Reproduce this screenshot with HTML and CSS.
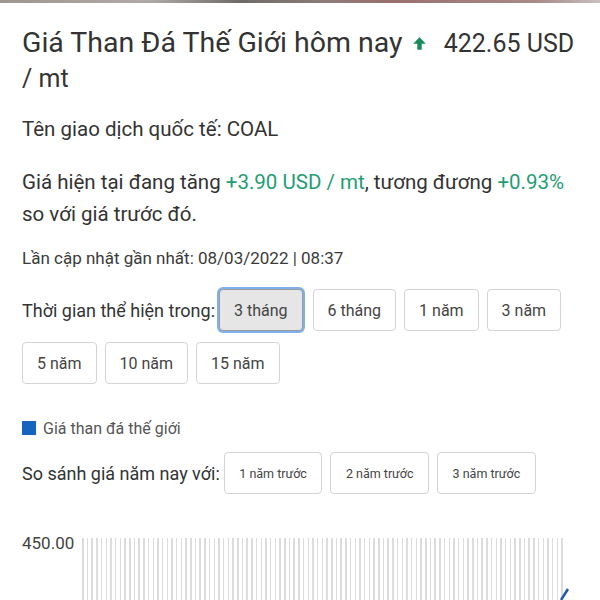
FILE: index.html
```html
<!DOCTYPE html>
<html>

<head>
    <title>Giá Than Đá Thế Giới</title>
    <link rel="stylesheet" href="styles.css">
</head>

<body>
    <div class="topbar"></div>

    <div class="page">
        <h1 class="title">
            Giá Than Đá Thế Giới hôm nay
            <span class="arrow">
                <svg width="15" height="15" viewBox="0 0 24 24">
                    <path d="M12 2L2 12.5h6.5V22h7v-9.5H22z" fill="#178a5c" />
                </svg>
            </span>
            <span class="price">422.65 USD / mt</span>
        </h1>

        <p class="code">Tên giao dịch quốc tế: COAL</p>

        <p class="change">
            Giá hiện tại đang tăng <span class="up">+3.90 USD / mt</span>, tương đương
            <span class="up">+0.93%</span> so với giá trước đó.
        </p>

        <p class="updated">Lần cập nhật gần nhất: 08/03/2022 | 08:37</p>

        <div class="range">
            <span class="range-label">Thời gian thể hiện trong:</span>
            <button class="btn active">3 tháng</button>
            <button class="btn">6 tháng</button>
            <button class="btn">1 năm</button>
            <button class="btn">3 năm</button>
            <button class="btn">5 năm</button>
            <button class="btn">10 năm</button>
            <button class="btn">15 năm</button>
        </div>

        <div class="legend">
            <span class="swatch"></span>
            Giá than đá thế giới
        </div>

        <div class="compare">
            <span class="compare-label">So sánh giá năm nay với:</span>
            <button class="btn small">1 năm trước</button>
            <button class="btn small">2 năm trước</button>
            <button class="btn small">3 năm trước</button>
        </div>

        <div class="chart">
            <span class="axis">450.00</span>
            <div class="grid">
                <svg class="line" width="10" height="14" viewBox="0 0 10 14">
                    <path d="M1 14L8 3" stroke="#1c5aa8" stroke-width="2.5" fill="none" />
                </svg>
            </div>
        </div>
    </div>
</body>

</html>
```

FILE: styles.css
```css
body {
    margin: 0;
    font-family: Roboto, "Noto Sans", sans-serif;
    color: #333;
    background-color: #fff;
    overflow: hidden;
}

.topbar {
    height: 3px;
    background: linear-gradient(90deg, #a09590, #b0aaa6 25%, #6f6b68 40%, #8e7c78 55%, #9a6e6e 65%, #a88c8a 90%, #c8c0c0);
}

.page {
    padding: 0 22px;
}

.title {
    margin: 23px 0 0;
    font-size: 28.5px;
    font-weight: 400;
    line-height: 34px;
}

.arrow svg {
    vertical-align: 1px;
    margin-left: 2px;
}

.price {
    font-size: 25px;
    margin-left: 10px;
}

.code {
    margin: 19px 0 0;
    font-size: 20.5px;
    line-height: 28px;
}

.change {
    margin: 23px 0 0;
    font-size: 20.5px;
    line-height: 32px;
}

.up {
    color: #1f9d74;
}

.updated {
    margin: 16px 0 0;
    font-size: 17px;
    line-height: 24px;
    color: #3a3a3a;
}

.range {
    display: flex;
    flex-wrap: wrap;
    align-items: center;
    gap: 11px 8px;
    margin-top: 19px;
}

.range-label,
.compare-label {
    font-size: 18px;
    margin-right: -4px;
}

.btn {
    height: 42px;
    padding: 0 14px;
    font-family: Roboto, "Noto Sans", sans-serif;
    font-size: 16px;
    color: #444;
    background-color: #fff;
    border: 1px solid #d4d4d4;
    border-radius: 4px;
}

.btn.active {
    background-color: #e6e6e6;
    border-color: #9a9a9a;
    box-shadow: 0 0 0 2px #7fb0ee;
    margin-right: 2px;
}

.legend {
    display: flex;
    align-items: center;
    gap: 7px;
    margin-top: 34px;
    height: 20px;
    font-size: 16px;
    color: #555;
}

.swatch {
    width: 14px;
    height: 14px;
    background-color: #1565c0;
}

.compare {
    display: flex;
    align-items: center;
    gap: 8px;
    margin-top: 14px;
}

.btn.small {
    font-size: 12.5px;
    padding: 0 14.5px;
}

.chart {
    display: flex;
    gap: 8px;
    margin-top: 44px;
}

.axis {
    font-size: 17px;
    color: #444;
    line-height: 10px;
}

.grid {
    position: relative;
    width: 484px;
    height: 70px;
    background: repeating-linear-gradient(90deg, #dcdcdc 0 1.5px, transparent 1.5px 4.7px);
}

.line {
    position: absolute;
    right: -4px;
    top: 48px;
}
```
